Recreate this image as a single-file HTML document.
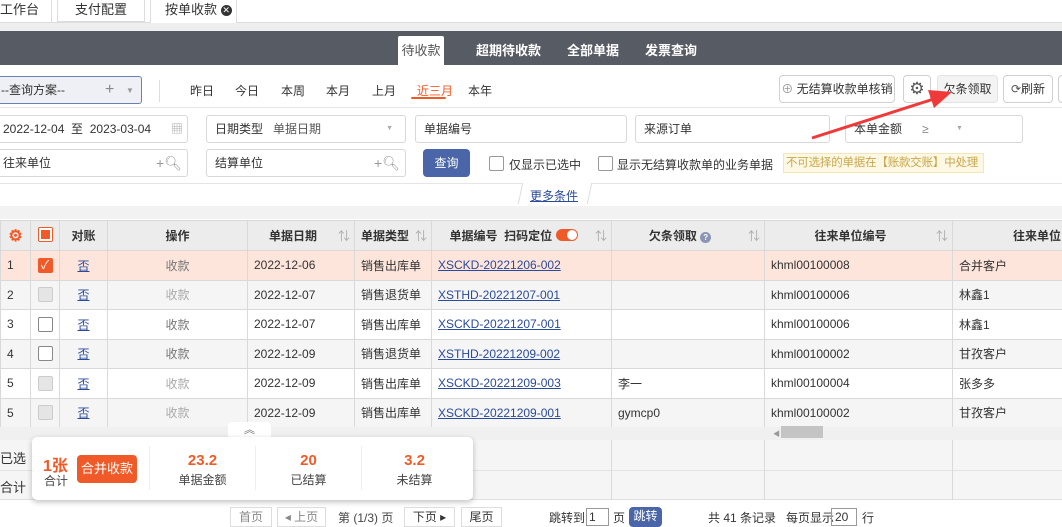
<!DOCTYPE html>
<html><head><meta charset="utf-8"><style>
*{box-sizing:border-box;margin:0;padding:0}
body{width:1062px;height:522px;overflow:hidden;background:#fff;font-family:"Liberation Sans","Noto Sans CJK SC",sans-serif;font-size:12px;color:#333;position:relative}
.a{position:absolute}
.inp{position:absolute;border:1px solid #d8d8d8;border-radius:3px;background:#fff;padding-left:8px;line-height:26px;height:28px;font-size:12px;color:#333}
.btn{position:absolute;border:1px solid #d0d0d0;border-radius:4px;background:#fff;height:28px;line-height:26px;text-align:center;font-size:12px}
.cb{position:absolute;width:15px;height:15px;border:1px solid #999;border-radius:2px;background:#fff}
table{border-collapse:collapse;position:absolute;left:0;top:220px;table-layout:fixed;width:1072px}
td{border:1px solid #d9d9d9;height:29.5px;font-size:12px;padding:0 6px;white-space:nowrap;overflow:hidden}
th{border:1px solid #d9d9d9;height:30px;background:#ececec;font-size:12px;font-weight:bold;color:#333;white-space:nowrap;overflow:hidden}
.lnk{color:#2a4a9a;text-decoration:underline}
.c{text-align:center}
.srt{color:#aaa;float:right;font-weight:normal;margin-right:4px}
</style></head><body>
<div class="a" style="left:0;top:0;width:1062px;height:23px;background:#fff;border-bottom:1px solid #ddd"></div>
<div class="a" style="left:0;top:0;width:52px;height:22px;border-right:1px solid #ddd;line-height:20px;font-size:13px">工作台</div>
<div class="a" style="left:57px;top:0;width:88px;height:22px;border:1px solid #ddd;border-top:0;line-height:20px;font-size:13px;text-align:center">支付配置</div>
<div class="a" style="left:150px;top:0;width:87px;height:23px;border:1px solid #ddd;border-top:0;border-bottom:0;background:#fff;line-height:20px;font-size:13px;padding-left:14px">按单收款 <span style="display:inline-block;width:11px;height:11px;border-radius:50%;background:#333;color:#fff;font-size:9px;line-height:11px;text-align:center;vertical-align:1px">✕</span></div>
<div class="a" style="left:0;top:23px;width:1062px;height:8px;background:#eee"></div>
<div class="a" style="left:0;top:31px;width:1062px;height:34px;background:#575b64"></div>
<div class="a" style="left:398px;top:36px;width:46px;height:29px;background:#fff;border-radius:2px 2px 0 0;text-align:center;line-height:30px;font-size:13px;color:#555">待收款</div>
<div class="a" style="left:476px;top:36px;line-height:30px;font-size:13px;color:#fff;font-weight:bold">超期待收款</div>
<div class="a" style="left:567px;top:36px;line-height:30px;font-size:13px;color:#fff;font-weight:bold">全部单据</div>
<div class="a" style="left:645px;top:36px;line-height:30px;font-size:13px;color:#fff;font-weight:bold">发票查询</div>
<div class="a" style="left:-2px;top:76px;width:144px;height:28px;border:1px solid #6b7fb0;border-radius:3px;background:#eef0f6;line-height:26px;padding-left:2px">--查询方案--<span style="position:absolute;left:106px;color:#888;font-size:16px">+</span><span style="position:absolute;left:127px;top:1px;color:#999;font-size:8px">▼</span></div>
<div class="a" style="left:159px;top:80px;width:1px;height:22px;background:#ddd"></div>
<div class="a" style="left:190px;top:82px">昨日</div>
<div class="a" style="left:235px;top:82px">今日</div>
<div class="a" style="left:281px;top:82px">本周</div>
<div class="a" style="left:326px;top:82px">本月</div>
<div class="a" style="left:372px;top:82px">上月</div>
<div class="a" style="left:417px;top:82px;color:#f05a28">近三月</div>
<div class="a" style="left:411px;top:97px;width:35px;height:2px;background:#f05a28;border-radius:1px"></div>
<div class="a" style="left:468px;top:82px">本年</div>
<div class="btn" style="left:779px;top:75px;width:116px"><span style="color:#999">⊕</span> 无结算收款单核销</div>
<div class="btn" style="left:903px;top:75px;width:28px;font-size:17px;color:#555">⚙</div>
<div class="btn" style="left:937px;top:75px;width:61px;background:#f3f3f3;border-color:#e3e3e3">欠条领取</div>
<div class="btn" style="left:1003px;top:75px;width:50px"><span style="color:#555">⟳</span>刷新</div>
<div class="btn" style="left:1058px;top:75px;width:10px"></div>
<div class="a" style="left:0;top:107px;width:1062px;height:1px;background:#e5e5e5"></div>
<div class="inp" style="left:-6px;top:115px;width:194px">2022-12-04 &nbsp;至 &nbsp;2023-03-04<span style="position:absolute;right:4px;color:#aaa">▦</span></div>
<div class="inp" style="left:206px;top:115px;width:200px">日期类型 &nbsp; <span style="color:#555">单据日期</span><span style="position:absolute;right:12px;color:#aaa;font-size:7px">▼</span></div>
<div class="inp" style="left:415px;top:115px;width:212px">单据编号</div>
<div class="inp" style="left:635px;top:115px;width:195px">来源订单</div>
<div class="inp" style="left:845px;top:115px;width:178px">本单金额 &nbsp; &nbsp; &nbsp;<span style="color:#888">≥</span><span style="position:absolute;left:110px;color:#aaa;font-size:7px">▼</span></div>
<div class="inp" style="left:-6px;top:149px;width:194px">往来单位<span style="position:absolute;right:5px;color:#999;font-size:14px">+🔍︎</span></div>
<div class="inp" style="left:206px;top:149px;width:200px">结算单位<span style="position:absolute;right:5px;color:#999;font-size:14px">+🔍︎</span></div>
<div class="a" style="left:423px;top:149px;width:47px;height:28px;background:#4a66a8;border-radius:4px;color:#fff;text-align:center;line-height:28px">查询</div>
<div class="cb" style="left:489px;top:156px"></div>
<div class="a" style="left:509px;top:156px">仅显示已选中</div>
<div class="cb" style="left:598px;top:156px"></div>
<div class="a" style="left:617px;top:156px">显示无结算收款单的业务单据</div>
<div class="a" style="left:783px;top:153px;width:201px;height:20px;background:#fdf8e3;border:1px solid #f3e6b8;color:#c9a74d;line-height:18px;padding-left:2px;white-space:nowrap;overflow:hidden;font-size:11.5px;letter-spacing:-0.2px">不可选择的单据在【账款交账】中处理</div>
<div class="a" style="left:0;top:183px;width:1062px;height:1px;background:#e5e5e5"></div>
<div class="a" style="left:520px;top:183px;width:70px;height:21px;background:#fff;border-left:1px solid #ddd;border-right:1px solid #ddd;transform:skewX(-12deg)"></div>
<div class="a" style="left:530px;top:187px;color:#2a4a9a;text-decoration:underline">更多条件</div>
<div class="a" style="left:0;top:206px;width:1062px;height:13px;background:#f2f2f2"></div>
<table>
<colgroup><col style="width:30px"><col style="width:29px"><col style="width:48px"><col style="width:140px"><col style="width:107px"><col style="width:77px"><col style="width:180px"><col style="width:153px"><col style="width:188px"><col style="width:120px"></colgroup>
<tr><th style="color:#f05a28;font-size:16px">⚙</th><th><span style="display:inline-block;width:15px;height:15px;border:1px solid #f05a28;border-radius:2px;background:#fff;padding:2px"><span style="display:block;width:9px;height:9px;background:#f05a28"></span></span></th><th>对账</th><th>操作</th><th>单据日期<span class="srt">⇅</span></th><th>单据类型 <span class="srt">⇅</span></th><th>单据编号 &nbsp;扫码定位 <span style="display:inline-block;width:22px;height:12px;border-radius:6px;background:#f05a28;vertical-align:-1px;position:relative"><span style="position:absolute;right:1px;top:1px;width:10px;height:10px;border-radius:50%;background:#fff"></span></span><span class="srt">⇅</span></th><th>欠条领取 <span style="display:inline-block;width:11px;height:11px;border-radius:50%;background:#8a95b5;color:#fff;font-size:8px;line-height:11px">?</span><span class="srt">⇅</span></th><th>往来单位编号<span class="srt">⇅</span></th><th style="text-align:left;padding-left:60px">往来单位</th></tr>
<tr style="background:#fde5dc"><td>1</td><td class="c" style="padding:0"><span style="display:inline-block;width:15px;height:15px;background:#f05a28;border-radius:2px;color:#fff;font-size:12px;line-height:15px">✓</span></td><td class="c lnk">否</td><td class="c" style="color:#777">收款</td><td>2022-12-06</td><td>销售出库单</td><td class="lnk">XSCKD-20221206-002</td><td></td><td>khml00100008</td><td>合并客户</td></tr>
<tr style="background:#f5f5f5"><td>2</td><td class="c" style="padding:0"><span style="display:inline-block;width:15px;height:15px;background:#e5e5e5;border:1px solid #ccc;border-radius:2px;vertical-align:middle"></span></td><td class="c lnk">否</td><td class="c" style="color:#aaa">收款</td><td>2022-12-07</td><td>销售退货单</td><td class="lnk">XSTHD-20221207-001</td><td></td><td>khml00100006</td><td>林鑫1</td></tr>
<tr style="background:#fff"><td>3</td><td class="c" style="padding:0"><span style="display:inline-block;width:15px;height:15px;border:1px solid #888;border-radius:2px;vertical-align:middle"></span></td><td class="c lnk">否</td><td class="c" style="color:#777">收款</td><td>2022-12-07</td><td>销售出库单</td><td class="lnk">XSCKD-20221207-001</td><td></td><td>khml00100006</td><td>林鑫1</td></tr>
<tr style="background:#f5f5f5"><td>4</td><td class="c" style="padding:0"><span style="display:inline-block;width:15px;height:15px;background:#fff;border:1px solid #888;border-radius:2px;vertical-align:middle"></span></td><td class="c lnk">否</td><td class="c" style="color:#777">收款</td><td>2022-12-09</td><td>销售退货单</td><td class="lnk">XSTHD-20221209-002</td><td></td><td>khml00100002</td><td>甘孜客户</td></tr>
<tr style="background:#fff"><td>5</td><td class="c" style="padding:0"><span style="display:inline-block;width:15px;height:15px;background:#e5e5e5;border:1px solid #ccc;border-radius:2px;vertical-align:middle"></span></td><td class="c lnk">否</td><td class="c" style="color:#aaa">收款</td><td>2022-12-09</td><td>销售出库单</td><td class="lnk">XSCKD-20221209-003</td><td>李一</td><td>khml00100004</td><td>张多多</td></tr>
<tr style="background:#f5f5f5"><td>5</td><td class="c" style="padding:0"><span style="display:inline-block;width:15px;height:15px;background:#e5e5e5;border:1px solid #ccc;border-radius:2px;vertical-align:middle"></span></td><td class="c lnk">否</td><td class="c" style="color:#aaa">收款</td><td>2022-12-09</td><td>销售出库单</td><td class="lnk">XSCKD-20221209-001</td><td>gymcp0</td><td>khml00100002</td><td>甘孜客户</td></tr>
</table>
<div class="a" style="left:0;top:427px;width:1062px;height:13px;background:#f0f0f0"></div>
<div class="a" style="left:773px;top:429px;color:#999;font-size:7px">◀</div>
<div class="a" style="left:781px;top:426px;width:42px;height:12px;background:#c4c4c4"></div>
<div class="a" style="left:0;top:440px;width:1062px;height:60px;background:#f5f5f5;border-bottom:1px solid #e0e0e0"></div>
<div class="a" style="left:0;top:470px;width:1062px;height:1px;background:#e3e3e3"></div>
<div class="a" style="left:611px;top:440px;width:1px;height:60px;background:#d9d9d9"></div>
<div class="a" style="left:764px;top:440px;width:1px;height:60px;background:#d9d9d9"></div>
<div class="a" style="left:952px;top:440px;width:1px;height:60px;background:#d9d9d9"></div>
<div class="a" style="left:0;top:448px;font-size:13px">已选</div>
<div class="a" style="left:0;top:477px;font-size:13px">合计</div>
<div class="a" style="left:228px;top:422px;width:43px;height:18px;background:#fff;border-radius:4px 4px 0 0;text-align:center;color:#666;font-size:11px;line-height:16px">︽</div>
<div class="a" style="left:32px;top:437px;width:441px;height:63px;background:#fff;border-radius:5px;box-shadow:0 2px 6px rgba(0,0,0,.25)"></div>
<div class="a" style="left:43px;top:452px;color:#f05a28;font-size:16px;font-weight:bold">1张</div>
<div class="a" style="left:44px;top:472px;color:#444">合计</div>
<div class="a" style="left:77px;top:455px;width:60px;height:28px;background:#f05a28;border-radius:4px;color:#fff;text-align:center;line-height:28px;font-size:13px">合并收款</div>
<div class="a" style="left:149px;top:446px;width:1px;height:44px;background:#eee"></div>
<div class="a" style="left:255px;top:446px;width:1px;height:44px;background:#eee"></div>
<div class="a" style="left:361px;top:446px;width:1px;height:44px;background:#eee"></div>
<div class="a" style="left:150px;top:452px;width:105px;text-align:center;color:#f05a28;font-size:15px;font-weight:bold">23.2</div>
<div class="a" style="left:150px;top:471px;width:105px;text-align:center;color:#444">单据金额</div>
<div class="a" style="left:256px;top:452px;width:105px;text-align:center;color:#f05a28;font-size:15px;font-weight:bold">20</div>
<div class="a" style="left:256px;top:471px;width:105px;text-align:center;color:#444">已结算</div>
<div class="a" style="left:362px;top:452px;width:105px;text-align:center;color:#f05a28;font-size:15px;font-weight:bold">3.2</div>
<div class="a" style="left:362px;top:471px;width:105px;text-align:center;color:#444">未结算</div>
<div class="a" style="left:230px;top:507px;width:42px;height:20px;border:1px solid #ddd;text-align:center;color:#888;line-height:18px">首页</div>
<div class="a" style="left:277px;top:507px;width:49px;height:20px;border:1px solid #ddd;text-align:center;color:#888;line-height:18px">◂ 上页</div>
<div class="a" style="left:338px;top:509px;color:#444">第 (1/3) 页</div>
<div class="a" style="left:404px;top:507px;width:51px;height:20px;border:1px solid #ddd;text-align:center;line-height:18px">下页 ▸</div>
<div class="a" style="left:461px;top:507px;width:41px;height:20px;border:1px solid #ddd;text-align:center;line-height:18px">尾页</div>
<div class="a" style="left:549px;top:509px">跳转到</div>
<div class="a" style="left:586px;top:508px;width:23px;height:18px;border:1px solid #999;padding-left:2px;line-height:16px">1</div>
<div class="a" style="left:613px;top:509px">页</div>
<div class="a" style="left:629px;top:507px;width:33px;height:20px;background:#4a66a8;border-radius:4px;color:#fff;text-align:center;line-height:18px">跳转</div>
<div class="a" style="left:708px;top:509px">共 41 条记录 &nbsp; 每页显示</div>
<div class="a" style="left:831px;top:508px;width:26px;height:18px;border:1px solid #999;padding-left:3px;line-height:16px">20</div>
<div class="a" style="left:862px;top:509px">行</div>
<svg class="a" style="left:0;top:0" width="1062" height="522"><line x1="812" y1="138" x2="940" y2="97" stroke="#f03a3a" stroke-width="3"/><polygon points="952,92 928,90 934,108" fill="#f03a3a"/></svg>
</body></html>
